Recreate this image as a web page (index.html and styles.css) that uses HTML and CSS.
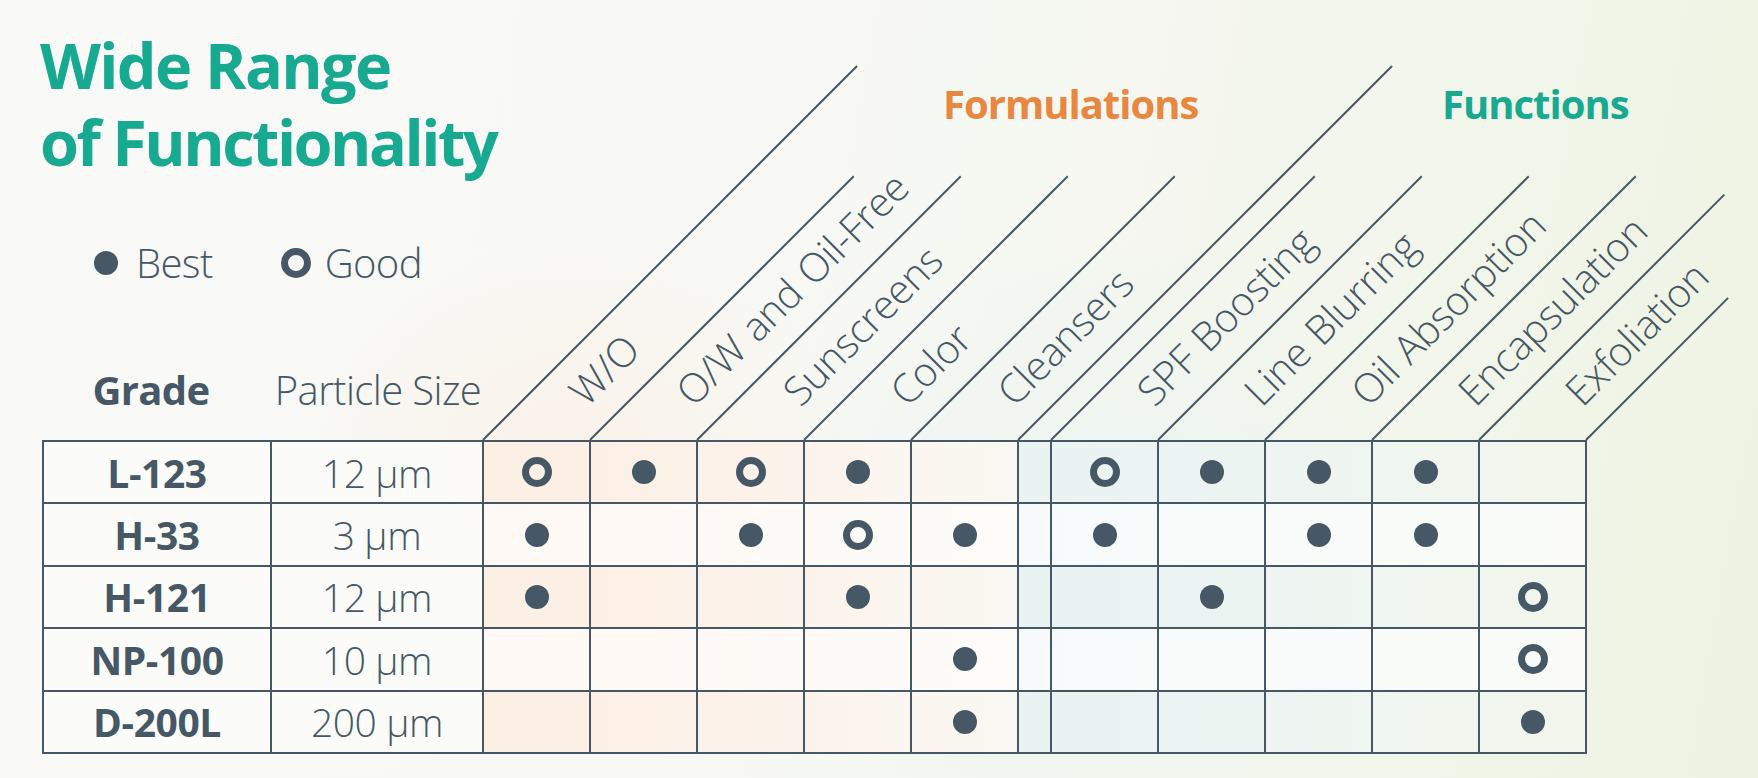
FILE: index.html
```html
<!DOCTYPE html>
<html lang="en">
<head>
<meta charset="utf-8">
<title>Wide Range of Functionality</title>
<link rel="stylesheet" href="styles.css">
</head>
<body>
<div class="page">
  <div class="top">
    <div class="intro">
      <h1 class="title"><span class="t1">Wide Range</span><span class="t2">of Functionality</span></h1>
      <div class="legend">
        <span class="key"><span class="dot"></span>Best</span>
        <span class="key key-good"><span class="ring"></span>Good</span>
      </div>
      <div class="colheads">
        <span class="ch ch-grade">Grade</span>
        <span class="ch ch-size">Particle Size</span>
      </div>
    </div>
    <div class="heads">
      <div class="groups">
        <span class="grp grp-form">Formulations</span>
        <span class="grp grp-func">Functions</span>
      </div>
      <div class="diag">
        <div class="dc"><i class="ln long"></i><span class="lbl">W/O</span></div>
        <div class="dc"><i class="ln mid"></i><span class="lbl">O/W and Oil-Free</span></div>
        <div class="dc"><i class="ln mid"></i><span class="lbl">Sunscreens</span></div>
        <div class="dc"><i class="ln mid"></i><span class="lbl">Color</span></div>
        <div class="dc"><i class="ln mid"></i><span class="lbl">Cleansers</span></div>
        <div class="dc"><i class="ln long"></i></div>
        <div class="dc"><i class="ln mid"></i><span class="lbl">SPF Boosting</span></div>
        <div class="dc"><i class="ln mid"></i><span class="lbl">Line Blurring</span></div>
        <div class="dc"><i class="ln mid"></i><span class="lbl">Oil Absorption</span></div>
        <div class="dc"><i class="ln mid"></i><span class="lbl">Encapsulation</span></div>
        <div class="dc dc-last"><i class="ln clip1"></i><span class="lbl">Exfoliation</span><i class="ln clip2 edge"></i></div>
      </div>
    </div>
  </div>

  <div class="tbl">
    <!-- L-123 -->
    <div class="c grade">L-123</div><div class="c size">12 µm</div>
    <div class="c"><span class="ring"></span></div><div class="c"><span class="dot"></span></div><div class="c"><span class="ring"></span></div><div class="c"><span class="dot"></span></div><div class="c"></div>
    <div class="c"></div>
    <div class="c"><span class="ring"></span></div><div class="c"><span class="dot"></span></div><div class="c"><span class="dot"></span></div><div class="c"><span class="dot"></span></div><div class="c"></div>
    <!-- H-33 -->
    <div class="c grade">H-33</div><div class="c size">3 µm</div>
    <div class="c e"><span class="dot"></span></div><div class="c e"></div><div class="c e"><span class="dot"></span></div><div class="c e"><span class="ring"></span></div><div class="c e"><span class="dot"></span></div>
    <div class="c e"></div>
    <div class="c e"><span class="dot"></span></div><div class="c e"></div><div class="c e"><span class="dot"></span></div><div class="c e"><span class="dot"></span></div><div class="c e"></div>
    <!-- H-121 -->
    <div class="c grade">H-121</div><div class="c size">12 µm</div>
    <div class="c"><span class="dot"></span></div><div class="c"></div><div class="c"></div><div class="c"><span class="dot"></span></div><div class="c"></div>
    <div class="c"></div>
    <div class="c"></div><div class="c"><span class="dot"></span></div><div class="c"></div><div class="c"></div><div class="c"><span class="ring"></span></div>
    <!-- NP-100 -->
    <div class="c grade">NP-100</div><div class="c size">10 µm</div>
    <div class="c e"></div><div class="c e"></div><div class="c e"></div><div class="c e"></div><div class="c e"><span class="dot"></span></div>
    <div class="c e"></div>
    <div class="c e"></div><div class="c e"></div><div class="c e"></div><div class="c e"></div><div class="c e"><span class="ring"></span></div>
    <!-- D-200L -->
    <div class="c grade">D-200L</div><div class="c size">200 µm</div>
    <div class="c"></div><div class="c"></div><div class="c"></div><div class="c"></div><div class="c"><span class="dot"></span></div>
    <div class="c"></div>
    <div class="c"></div><div class="c"></div><div class="c"></div><div class="c"></div><div class="c"><span class="dot"></span></div>
  </div>
</div>
</body>
</html>
```

FILE: styles.css
```css
html, body {
  margin: 0;
  padding: 0;
}

body {
  width: 1758px;
  height: 778px;
  overflow: hidden;
  font-family: "Open Sans", "Noto Sans", sans-serif;
  color: #465865;
  background:
    radial-gradient(ellipse 300px 240px at 570px 460px, rgba(252, 233, 216, 0.45), rgba(252, 233, 216, 0)),
    radial-gradient(ellipse 380px 320px at 1120px 560px, rgba(222, 238, 240, 0.45), rgba(222, 238, 240, 0)),
    linear-gradient(100deg, #f9faf8 0%, #f8f9f6 40%, #f3f6ec 75%, #eef3e2 100%);
}

.page {
  width: 1758px;
  height: 778px;
  padding-left: 40px;
  box-sizing: border-box;
}

.top {
  display: flex;
  height: 440px;
}

.intro {
  flex: 0 0 444px;
  min-width: 0;
  width: 444px;
  display: flex;
  flex-direction: column;
  white-space: nowrap;
}

.title {
  margin: 26px 0 0;
  font-size: 63px;
  line-height: 77px;
  font-weight: 700;
  color: #18a991;
  white-space: nowrap;
}

.t1,
.t2 {
  display: block;
  height: 77px;
}

.t1 {
  letter-spacing: -1.7px;
}

.t2 {
  letter-spacing: -2.5px;
}

.legend {
  margin-top: 60px;
  display: flex;
  align-items: center;
  padding-left: 54px;
  font-size: 40px;
  font-weight: 300;
  line-height: 46px;
  letter-spacing: -0.6px;
}

.key {
  display: flex;
  align-items: center;
  gap: 18px;
}

.key-good {
  margin-left: 68px;
  gap: 14px;
}

.dot {
  display: block;
  width: 24px;
  height: 24px;
  border-radius: 50%;
  background: #465865;
}

.ring {
  display: block;
  width: 30px;
  height: 30px;
  box-sizing: border-box;
  border: 7px solid #465865;
  border-radius: 50%;
}

.colheads {
  margin-top: 81px;
  display: flex;
  font-size: 40px;
  line-height: 46px;
  letter-spacing: -0.6px;
}

.ch {
  text-align: center;
  flex: 0 0 auto;
}

.ch-grade {
  width: 222px;
  font-weight: 700;
}

.ch-size {
  width: 232px;
  font-weight: 300;
}

/* diagonal header */
.heads {
  flex: 1;
  min-width: 0;
  display: grid;
  height: 440px;
}

.groups,
.diag {
  grid-area: 1 / 1;
}

.groups {
  align-self: start;
  margin-top: 81px;
  padding-left: 459px;
  display: flex;
  font-size: 40px;
  font-weight: 700;
  line-height: 46px;
  letter-spacing: -1px;
}

.grp-form {
  width: 499px;
  color: #e8873f;
}

.grp-func {
  color: #18a991;
}

.diag {
  align-self: end;
  height: 374px;
  display: grid;
  grid-template-columns: repeat(5, 107px) 33px repeat(5, 107px);
}

.dc {
  position: relative;
}

.ln {
  position: absolute;
  left: -1px;
  bottom: -1px;
  height: 2px;
  background: #465865;
  transform-origin: 0 50%;
  transform: rotate(-45deg);
}

.ln.long { width: 529px; }
.ln.mid { width: 373px; }
.ln.clip1 { width: 347px; }
.ln.clip2 { width: 201px; }
.ln.edge { left: 106px; }

.lbl {
  position: absolute;
  left: 0;
  top: 100%;
  transform-origin: 0 0;
  transform: rotate(-45deg);
  padding-left: 95px;
  font-size: 40px;
  font-weight: 300;
  line-height: 70px;
  letter-spacing: -0.4px;
  word-spacing: 2px;
  white-space: nowrap;
}

/* table */
.tbl {
  margin-left: 2px;
  display: grid;
  grid-template-columns: 228px 212px repeat(5, 107px) 33px repeat(5, 107px);
  grid-auto-rows: 62.4px;
  width: max-content;
  border-top: 2px solid #465865;
  border-left: 2px solid #465865;
  background: linear-gradient(to right,
    rgba(252, 252, 250, 0.85) 0, rgba(252, 252, 250, 0.85) 440px,
    #fcefe4 440px, #fcf1e8 660px, #fbf6ef 860px, #f9f8f2 975px,
    #e9f3f2 975px, #ecf4f2 1200px, #f0f5ee 1400px, #f2f6ec 1545px);
}

.c {
  box-sizing: border-box;
  border-right: 2px solid #465865;
  border-bottom: 2px solid #465865;
  display: flex;
  align-items: center;
  justify-content: center;
}

.c.e {
  background: rgba(255, 255, 255, 0.6);
}

.grade {
  font-size: 39px;
  font-weight: 700;
  letter-spacing: -0.4px;
}

.size {
  font-size: 39px;
  font-weight: 300;
  letter-spacing: -0.4px;
}
```
